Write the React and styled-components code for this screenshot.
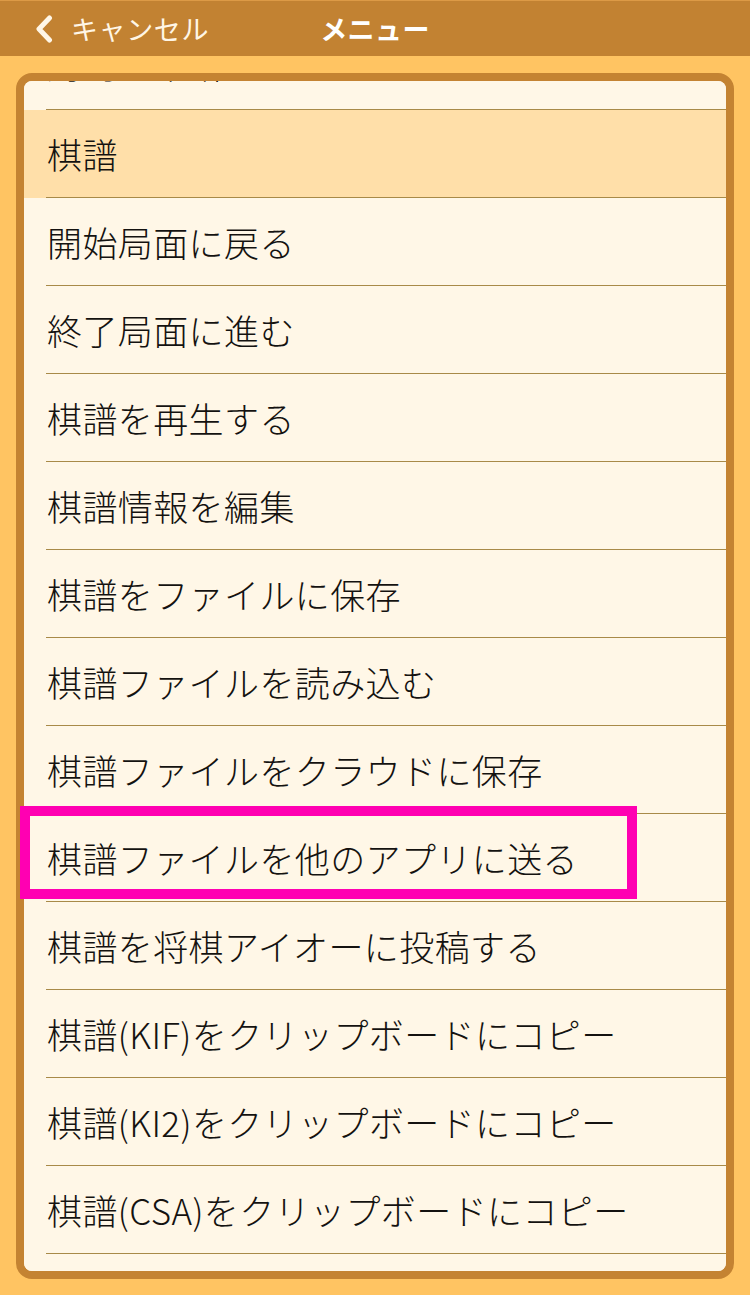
import React from "react";
import styled, { createGlobalStyle } from "styled-components";

const GlobalStyle = createGlobalStyle`
  html, body {
    margin: 0;
    padding: 0;
    background: #ffc462;
  }
  body {
    font-family: "Noto Sans CJK JP", sans-serif;
  }
`;

const Page = styled.div`
  width: 750px;
  height: 1295px;
  background: #ffc462;
  display: flex;
  flex-direction: column;
  overflow: hidden;
`;

const NavBar = styled.header`
  flex: none;
  height: 56px;
  box-sizing: border-box;
  border-top: 1px solid #dc9a46;
  background: #c28232;
  display: grid;
  grid-template-columns: 1fr auto 1fr;
  align-items: center;
  color: #fff6e6;
`;

const BackButton = styled.div`
  display: flex;
  align-items: center;
  gap: 17px;
  padding-left: 34px;
  font-size: 27px;
  letter-spacing: 0.6px;
  font-weight: 400;
`;

const Title = styled.div`
  font-size: 27px;
  letter-spacing: 0.4px;
  font-weight: 700;
  color: #ffffff;
`;

const Main = styled.main`
  flex: 1;
  min-height: 0;
  position: relative;
  display: flex;
  padding: 17px 16px 16px;
`;

const Card = styled.section`
  flex: 1;
  min-height: 0;
  border: 8px solid #c48332;
  border-radius: 16px;
  background: #fff7e7;
  overflow: hidden;
`;

const List = styled.ul`
  list-style: none;
  margin: -59px 0 0;
  padding: 0;
`;

const Row = styled.li`
  height: 88px;
  background: ${(p) => (p.$active ? "#ffdfa9" : "#fff7e7")};
`;

const RowInner = styled.div`
  height: 100%;
  margin-left: 22px;
  padding: 0 0 ${(p) => (p.$scrolled ? "4px" : "0")} 1px;
  box-sizing: border-box;
  border-bottom: 1px solid #a88a48;
  display: flex;
  align-items: center;
  font-size: 35px;
  font-weight: 300;
  letter-spacing: 0.4px;
  color: #141210;
  white-space: nowrap;
`;

const Highlight = styled.div`
  position: absolute;
  left: 20px;
  top: 750px;
  width: 617px;
  height: 93px;
  box-sizing: border-box;
  border: 10px solid #ff00b2;
  pointer-events: none;
`;

const items = [
  { label: "対局を中断する", scrolled: true },
  { label: "棋譜", active: true },
  { label: "開始局面に戻る" },
  { label: "終了局面に進む" },
  { label: "棋譜を再生する" },
  { label: "棋譜情報を編集" },
  { label: "棋譜をファイルに保存" },
  { label: "棋譜ファイルを読み込む" },
  { label: "棋譜ファイルをクラウドに保存" },
  { label: "棋譜ファイルを他のアプリに送る" },
  { label: "棋譜を将棋アイオーに投稿する" },
  { label: "棋譜(KIF)をクリップボードにコピー" },
  { label: "棋譜(KI2)をクリップボードにコピー" },
  { label: "棋譜(CSA)をクリップボードにコピー" },
  { label: "局面をクリップボードにコピー" },
];

function Chevron() {
  return (
    <svg width="20" height="28" viewBox="0 0 20 28">
      <polyline
        points="15.5,3 5,14 15.5,25"
        fill="none"
        stroke="#fff6e6"
        strokeWidth="5"
        strokeLinecap="round"
        strokeLinejoin="round"
      />
    </svg>
  );
}

export default function App() {
  return (
    <Page>
      <GlobalStyle />
      <NavBar>
        <BackButton>
          <Chevron />
          キャンセル
        </BackButton>
        <Title>メニュー</Title>
        <div />
      </NavBar>
      <Main>
        <Card>
          <List>
            {items.map((item) => (
              <Row key={item.label} $active={item.active}>
                <RowInner $scrolled={item.scrolled}>{item.label}</RowInner>
              </Row>
            ))}
          </List>
        </Card>
        <Highlight />
      </Main>
    </Page>
  );
}
